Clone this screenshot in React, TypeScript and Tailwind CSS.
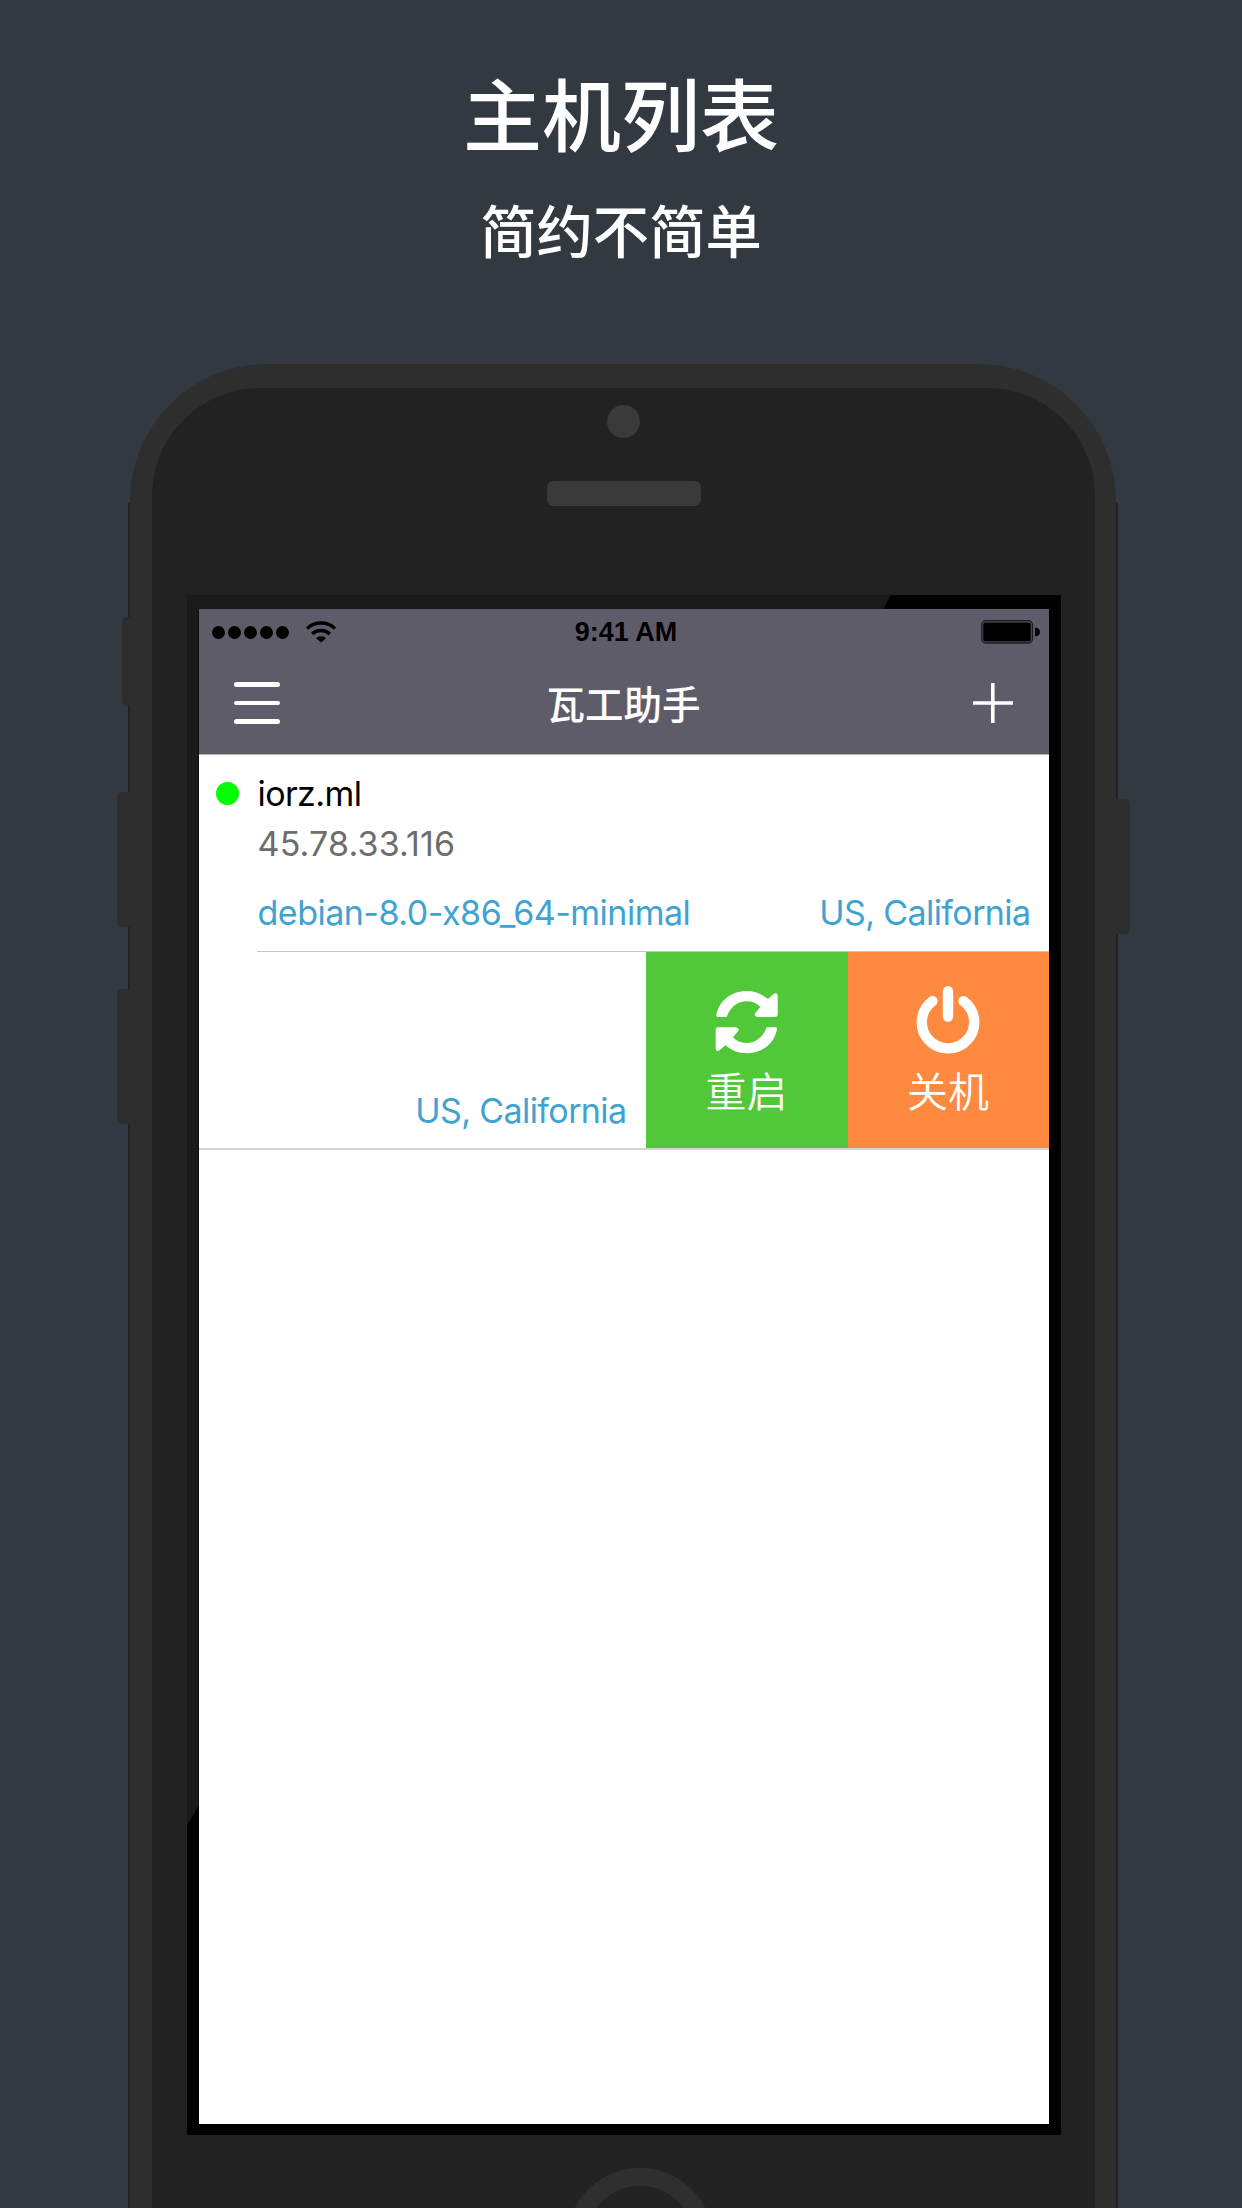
const CJK = "font-['Noto_Sans_CJK_SC',sans-serif]";

function WifiIcon() {
  return (
    <svg viewBox="0 0 30 22" className="ml-[17.5px] mt-[-1px] h-[22px] w-[30px]" fill="none" stroke="#000">
      <path d="M1 7.6C8.5 .2 21.500 .2 29 7.600" strokeWidth="3.400" />
      <path d="M6.200 13C11 8.300 19 8.300 23.800 13" strokeWidth="3.600" />
      <path d="M15 21.600L10.300 17.400C11 14.400 19 14.400 19.700 17.400Z" fill="#000" stroke="none" />
    </svg>
  );
}

function BatteryIcon() {
  return (
    <svg viewBox="0 0 60 24" className="h-[24px] w-[60px]" fill="none">
      <rect x=".8" y=".8" width="50.600" height="22.200" rx="4" stroke="#1d1c21" strokeWidth="1.400" />
      <rect x="2.200" y="2.600" width="47.600" height="19" rx="2" fill="#000" />
      <path d="M54 7.500C57.700 8 59 10 59 12S57.700 16 54 16.500Z" fill="#000" />
    </svg>
  );
}

function SyncIcon() {
  const arrow =
    "M233 382Q228 382 229 377C236 334 274 304 320 304C345 304 366 313 384 328L401 313Q413 307 413 320V374Q413 382 405 382H352Q340 379 346 370L361 352C351 341 338 335 320 335C293 335 271 352 260 382Z";
  return (
    <svg viewBox="222 286 198 210" className="h-[70px] w-[66px]" fill="#fff">
      <path d={arrow} />
      <path d={arrow} transform="rotate(180 320 397.500)" />
    </svg>
  );
}

function PowerIcon() {
  return (
    <svg viewBox="0 0 66 70" className="h-[70px] w-[66px]" fill="none" stroke="#fff" strokeWidth="10.400" strokeLinecap="round">
      <path d="M17.500 16.100A26.200 26.200 0 1 0 48.500 16.100" />
      <path d="M33 6.200V31.600" />
    </svg>
  );
}

function StatusBar() {
  return (
    <div className="grid h-[46px] grid-cols-3 items-center pl-[13px] pr-[8px]">
      <div className="flex items-center">
        <div className="flex gap-[3px]">
          {[0, 1, 2, 3, 4].map((i) => (
            <span key={i} className="size-[13px] rounded-full bg-black" />
          ))}
        </div>
        <WifiIcon />
      </div>
      <div className="whitespace-nowrap text-center font-['Liberation_Sans',sans-serif] text-[27px] leading-[30px] font-bold text-black">
        9:41 AM
      </div>
      <div className="flex justify-end">
        <BatteryIcon />
      </div>
    </div>
  );
}

function NavBar() {
  return (
    <div className="flex h-[99px] items-center justify-between pr-[35px] pb-[3px] pl-[35px]">
      <div className="flex w-[46px] flex-col gap-[13.500px]">
        <span className="h-[4.700px] rounded-full bg-white" />
        <span className="h-[4.700px] rounded-full bg-white" />
        <span className="h-[4.700px] rounded-full bg-white" />
      </div>
      <h2 className={`${CJK} mr-[6px] mb-[3px] text-[38.500px] leading-[50px] font-medium text-white`}>瓦工助手</h2>
      <svg viewBox="0 0 40 40" className="h-[40px] w-[40px]" stroke="#fff" strokeWidth="3.600">
        <path d="M0 20H40M19.800 0V40" />
      </svg>
    </div>
  );
}

function HostRow() {
  return (
    <div className="flex h-[197px] pl-[17px]">
      <span className="mt-[27px] size-[23px] shrink-0 rounded-full bg-[#00ff00]" />
      <div className="ml-[18px] flex flex-1 flex-col border-b border-[#c8c7cc] pr-[18px] pl-px text-[34px] leading-[50px]">
        <div className="mt-[14px] tracking-[-0.600px] text-black">iorz.ml</div>
        <div className="tracking-[0.170px] text-[#6d6d6d]">45.78.33.116</div>
        <div className="mt-[19px] flex justify-between tracking-[-0.500px] text-[#3fa3d2]">
          <span>debian-8.0-x86_64-minimal</span>
          <span className="tracking-[-0.600px]">US, California</span>
        </div>
      </div>
    </div>
  );
}

function SwipedRow() {
  return (
    <div className="flex h-[198px] border-b-2 border-[#d3d3d6]">
      <div className="flex flex-1 items-end justify-end pr-[19px] pb-[12px] text-[34px] leading-[50px] tracking-[-0.600px] text-[#3fa3d2]">
        US, California
      </div>
      <button className="flex w-[202px] flex-col items-center bg-[#51c83a] pt-[33px] text-white">
        <SyncIcon />
        <span className={`${CJK} mt-[5px] text-[41px] leading-[58px] font-[350]`}>重启</span>
      </button>
      <button className="flex w-[201px] flex-col items-center bg-[#fe8a3f] pt-[33px] text-white">
        <PowerIcon />
        <span className={`${CJK} mt-[5px] text-[41px] leading-[58px] font-[350]`}>关机</span>
      </button>
    </div>
  );
}

export default function App() {
  return (
    <main className="relative flex h-[2208px] w-[1242px] flex-col items-center overflow-hidden bg-[#323941] font-['Inter',sans-serif]">
      <header className={`${CJK} flex h-[364px] shrink-0 flex-col items-center text-white`}>
        <h1 className="mt-[54px] text-[79px] leading-[116px] font-medium">主机列表</h1>
        <p className="mt-[18px] text-[56.300px] leading-[82px] font-medium">简约不简单</p>
      </header>

      <div className="relative ml-[4px] w-[990px] shrink-0">
        <div className="absolute top-[139px] left-0 h-[1800px] w-full bg-[#222222]" />
        <div className="absolute top-[253px] left-[-6px] h-[88px] w-[20px] rounded-l-[5px] bg-[#2e2e2e]" />
        <div className="absolute top-[428px] left-[-11px] h-[135px] w-[20px] rounded-l-[5px] bg-[#2e2e2e]" />
        <div className="absolute top-[625px] left-[-11px] h-[135px] w-[20px] rounded-l-[5px] bg-[#2e2e2e]" />
        <div className="absolute top-[435px] right-[-11.500px] h-[135px] w-[20px] rounded-r-[5px] bg-[#2e2e2e]" />

        <div className="relative mr-[2px] ml-[2px] h-[2000px] rounded-t-[137px] bg-[#2e2e2e] pt-[24px] pr-[21px] pl-[22px]">
          <div className="flex h-[1976px] flex-col items-center rounded-t-[108px] bg-[#222222]">
            <div className="mt-[17px] size-[33px] rounded-full bg-[#3a3a3a]" />
            <div className="mt-[43px] h-[25px] w-[154px] rounded-[6px] bg-[#3a3a3a]" />

            <div className="relative mt-[89px] flex h-[1540px] w-[874px] shrink-0 flex-col bg-black px-[12px] pt-[14px] pb-[11px]">
              <div className="absolute top-0 left-0 h-[14px] w-[704px] bg-[#1a1a1a] [clip-path:polygon(0_0,100%_0,697px_100%,0_100%)]" />
              <div className="absolute top-0 left-0 h-[1231px] w-[12px] bg-[#1a1a1a] [clip-path:polygon(0_0,100%_0,100%_1211px,0_100%)]" />
              <div className="relative flex flex-1 flex-col bg-white">
                <div className="bg-[#5f5c6a]">
                  <StatusBar />
                  <NavBar />
                </div>
                <div className="h-px bg-[#b2b1b5]" />
                <HostRow />
                <SwipedRow />
              </div>
            </div>

            <div className="mt-[33px] ml-[32px] size-[146px] shrink-0 rounded-full border-[18px] border-[#2f2f2f]" />
          </div>
        </div>
      </div>
    </main>
  );
}
